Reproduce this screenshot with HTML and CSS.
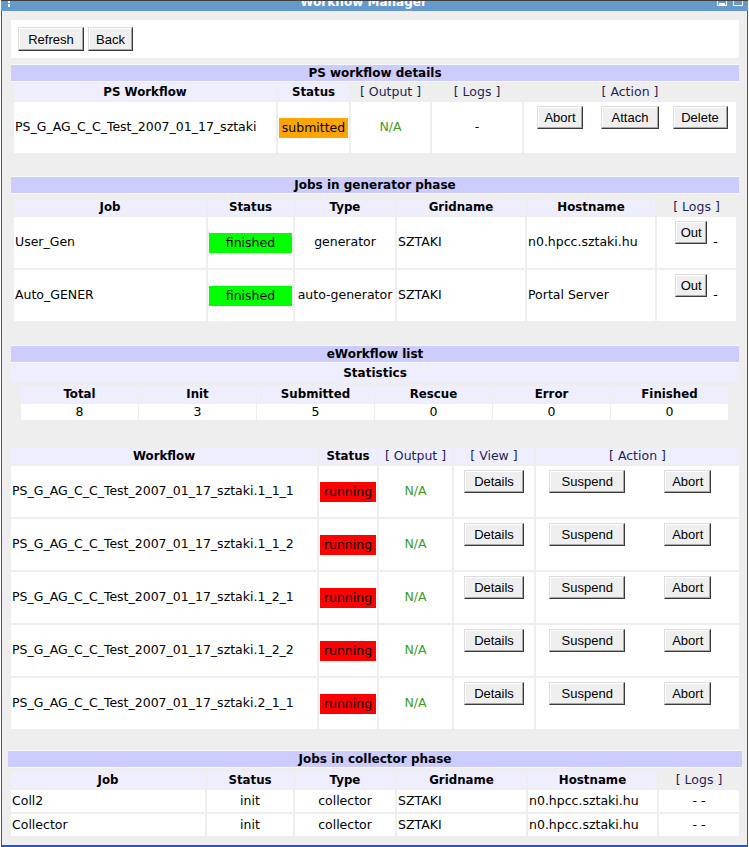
FILE: index.html
```html
<!DOCTYPE html>
<html>
<head>
<meta charset="utf-8">
<title>Workflow Manager</title>
<link rel="stylesheet" href="styles.css">
</head>
<body>
<div class="window">
  <div class="titlebar">
    <svg class="help" width="2" height="10" viewBox="0 0 2 10"><rect x="0" y="0" width="2" height="2" fill="#fff"/><rect x="0" y="3" width="2" height="3" fill="#fff"/></svg>
    <div class="title">Workflow Manager</div>
    <svg class="winicons" width="26" height="10" viewBox="0 0 26 10"><rect x="0.5" y="-5.5" width="9" height="10" fill="none" stroke="#fff"/><rect x="2" y="2" width="6" height="2" fill="#fff"/><rect x="16.5" y="-5.5" width="9" height="10" fill="none" stroke="#fff"/></svg>
  </div>
  <div class="frame">
    <div class="toolbar">
      <button class="btn btn-tool w-refresh">Refresh</button>
      <button class="btn btn-tool w-back">Back</button>
    </div>

    <section class="panel panel-ps">
      <h2 class="bar">PS workflow details</h2>
      <table class="grid grid-ps">
        <colgroup><col class="c262"><col class="c71"><col class="c79"><col class="c90"><col></colgroup>
        <tr class="head">
          <th class="hd">PS Workflow</th>
          <th class="hd">Status</th>
          <th class="lnk">[ Output ]</th>
          <th class="lnk">[ Logs ]</th>
          <th class="lnk">[ Action ]</th>
        </tr>
        <tr class="tall">
          <td>PS_G_AG_C_C_Test_2007_01_17_sztaki</td>
          <td class="status"><span class="badge submitted">submitted</span></td>
          <td class="na">N/A</td>
          <td class="center">-</td>
          <td class="acts-cell"><div class="acts three"><button class="btn w-abort">Abort</button><button class="btn w-attach">Attach</button><button class="btn w-delete">Delete</button></div></td>
        </tr>
      </table>
    </section>

    <section class="panel panel-gen">
      <h2 class="bar">Jobs in generator phase</h2>
      <table class="grid grid-gen">
        <colgroup><col class="c192"><col class="c85"><col class="c100"><col class="c128"><col class="c128"><col></colgroup>
        <tr class="head">
          <th class="hd">Job</th>
          <th class="hd">Status</th>
          <th class="hd">Type</th>
          <th class="hd">Gridname</th>
          <th class="hd">Hostname</th>
          <th class="lnk">[ Logs ]</th>
        </tr>
        <tr class="tall">
          <td>User_Gen</td>
          <td class="status"><span class="badge finished">finished</span></td>
          <td class="center">generator</td>
          <td>SZTAKI</td>
          <td>n0.hpcc.sztaki.hu</td>
          <td class="acts-cell"><div class="outlog"><button class="btn w-out">Out</button><span class="dash">-</span></div></td>
        </tr>
        <tr class="tall">
          <td>Auto_GENER</td>
          <td class="status"><span class="badge finished">finished</span></td>
          <td class="center">auto-generator</td>
          <td>SZTAKI</td>
          <td>Portal Server</td>
          <td class="acts-cell"><div class="outlog"><button class="btn w-out">Out</button><span class="dash">-</span></div></td>
        </tr>
      </table>
    </section>

    <section class="panel panel-ewf">
      <h2 class="bar">eWorkflow list</h2>
      <div class="subbar">Statistics</div>
      <table class="stats">
        <tr class="stats-head">
          <th>Total</th><th>Init</th><th>Submitted</th><th>Rescue</th><th>Error</th><th>Finished</th>
        </tr>
        <tr class="stats-vals">
          <td>8</td><td>3</td><td>5</td><td>0</td><td>0</td><td>0</td>
        </tr>
      </table>
    </section>

    <table class="grid grid-wf">
      <colgroup><col class="c306"><col class="c58"><col class="c73"><col class="c80"><col></colgroup>
      <tr class="head">
        <th class="hd">Workflow</th>
        <th class="hd">Status</th>
        <th class="lnk tinted">[ Output ]</th>
        <th class="lnk tinted">[ View ]</th>
        <th class="lnk tinted">[ Action ]</th>
      </tr>
      <tr class="tall">
        <td>PS_G_AG_C_C_Test_2007_01_17_sztaki.1_1_1</td>
        <td class="status"><span class="badge running">running</span></td>
        <td class="na">N/A</td>
        <td class="acts-cell center"><button class="btn w-details">Details</button></td>
        <td class="acts-cell"><div class="acts two"><button class="btn w-suspend">Suspend</button><button class="btn w-abort2">Abort</button></div></td>
      </tr>
      <tr class="tall">
        <td>PS_G_AG_C_C_Test_2007_01_17_sztaki.1_1_2</td>
        <td class="status"><span class="badge running">running</span></td>
        <td class="na">N/A</td>
        <td class="acts-cell center"><button class="btn w-details">Details</button></td>
        <td class="acts-cell"><div class="acts two"><button class="btn w-suspend">Suspend</button><button class="btn w-abort2">Abort</button></div></td>
      </tr>
      <tr class="tall">
        <td>PS_G_AG_C_C_Test_2007_01_17_sztaki.1_2_1</td>
        <td class="status"><span class="badge running">running</span></td>
        <td class="na">N/A</td>
        <td class="acts-cell center"><button class="btn w-details">Details</button></td>
        <td class="acts-cell"><div class="acts two"><button class="btn w-suspend">Suspend</button><button class="btn w-abort2">Abort</button></div></td>
      </tr>
      <tr class="tall">
        <td>PS_G_AG_C_C_Test_2007_01_17_sztaki.1_2_2</td>
        <td class="status"><span class="badge running">running</span></td>
        <td class="na">N/A</td>
        <td class="acts-cell center"><button class="btn w-details">Details</button></td>
        <td class="acts-cell"><div class="acts two"><button class="btn w-suspend">Suspend</button><button class="btn w-abort2">Abort</button></div></td>
      </tr>
      <tr class="tall">
        <td>PS_G_AG_C_C_Test_2007_01_17_sztaki.2_1_1</td>
        <td class="status"><span class="badge running">running</span></td>
        <td class="na">N/A</td>
        <td class="acts-cell center"><button class="btn w-details">Details</button></td>
        <td class="acts-cell"><div class="acts two"><button class="btn w-suspend">Suspend</button><button class="btn w-abort2">Abort</button></div></td>
      </tr>
    </table>

    <section class="panel panel-col">
      <h2 class="bar">Jobs in collector phase</h2>
      <table class="grid grid-col">
        <colgroup><col class="c194"><col class="c86"><col class="c100"><col class="c129"><col class="c129"><col></colgroup>
        <tr class="head">
          <th class="hd">Job</th>
          <th class="hd">Status</th>
          <th class="hd">Type</th>
          <th class="hd">Gridname</th>
          <th class="hd">Hostname</th>
          <th class="lnk">[ Logs ]</th>
        </tr>
        <tr class="short">
          <td>Coll2</td>
          <td class="center">init</td>
          <td class="center">collector</td>
          <td>SZTAKI</td>
          <td>n0.hpcc.sztaki.hu</td>
          <td class="center">- -</td>
        </tr>
        <tr class="short">
          <td>Collector</td>
          <td class="center">init</td>
          <td class="center">collector</td>
          <td>SZTAKI</td>
          <td>n0.hpcc.sztaki.hu</td>
          <td class="center">- -</td>
        </tr>
      </table>
    </section>
  </div>
</div>
</body>
</html>
```

FILE: styles.css
```css
html, body {
  margin: 0;
  padding: 0;
  background: #ffffff;
}

body {
  font-family: "DejaVu Sans", Verdana, sans-serif;
  font-size: 12.5px;
  line-height: 1.15;
  color: #000;
}

.window {
  width: 747px;
  margin-left: 1px;
}

/* ---------- title bar ---------- */
.titlebar {
  display: flex;
  height: 10px;
  overflow: hidden;
  background: #6699cc;
  border-top: 1px solid #404040;
}

.help {
  flex: none;
  margin-left: 7px;
  display: block;
}

.title {
  flex: 1;
  text-align: center;
  color: #fff;
  font-weight: bold;
  font-size: 12px;
  line-height: 14px;
  margin-top: -6px;
}

.winicons {
  flex: none;
  margin-right: 5px;
  display: block;
}

/* ---------- frame ---------- */
.frame {
  background: #eeeeee;
  border-style: solid;
  border-color: #2456d6;
  border-width: 0 1px 2px 1px;
  padding: 9px 5px 7px 6px;
}

.toolbar {
  margin: 0 3px;
  background: #fff;
  padding: 7px;
  display: flex;
  gap: 4px;
}

/* ---------- buttons ---------- */
.btn {
  font-family: "Liberation Sans", Arial, sans-serif;
  font-size: 13px;
  color: #000;
  background: #efefef;
  border: 1px solid;
  border-color: #dcdcdc #3a3a3a #3a3a3a #dcdcdc;
  box-shadow: inset -1px -1px 0 #a8a8a8, inset 1px 1px 0 #ffffff;
  height: 23px;
  padding: 0;
  margin: 0;
  text-align: center;
  box-sizing: border-box;
}

.btn-tool { height: 24px; }

.w-refresh { width: 66px; }
.w-back { width: 45px; }
.w-abort { width: 46px; }
.w-attach { width: 58px; }
.w-delete { width: 55px; }
.w-details { width: 60px; }
.w-suspend { width: 76px; }
.w-abort2 { width: 47px; }
.w-out { width: 32px; }

/* ---------- panels ---------- */
.panel-ps { margin: 7px 3px 0; }
.panel-gen { margin: 22px 3px 0; }
.panel-ewf { margin: 23px 3px 0; }
.panel-col { margin: 20px 0 0; }

.bar {
  margin: 0;
  height: 16px;
  background: #ccccff;
  font-size: 12px;
  font-weight: bold;
  line-height: 16px;
  text-align: center;
  box-shadow: 0 -1px 0 #f8f8ff, 0 1px 0 #f8f8ff;
}

.subbar {
  margin-top: 2px;
  height: 18px;
  line-height: 18px;
  background: #eeeeff;
  font-size: 12px;
  font-weight: bold;
  text-align: center;
}

/* ---------- data grids ---------- */
.grid {
  border-collapse: separate;
  border-spacing: 2px;
  table-layout: fixed;
}

.grid-ps { width: 726px; margin: 1px 1px 0; }
.grid-gen { width: 726px; margin: 4px 1px 0; }
.grid-wf { width: 732px; margin: 25px 1px 0; }
.grid-col { width: 732px; margin: 3px 1px 0; }

.c262 { width: 262px; }
.c71 { width: 71px; }
.c79 { width: 79px; }
.c90 { width: 90px; }
.c192 { width: 192px; }
.c85 { width: 85px; }
.c100 { width: 100px; }
.c128 { width: 128px; }
.c306 { width: 306px; }
.c58 { width: 58px; }
.c73 { width: 73px; }
.c80 { width: 80px; }
.c194 { width: 194px; }
.c86 { width: 86px; }
.c129 { width: 129px; }

.grid th,
.grid td {
  padding: 0 1px;
  white-space: nowrap;
  overflow: hidden;
}

.grid td {
  background: #fff;
  text-align: left;
  vertical-align: middle;
}

.grid tr.head { height: 16px; }
.grid tr.tall { height: 51px; }
.grid tr.short { height: 22px; }

.grid th {
  line-height: 16px;
  text-align: center;
}

.grid th.hd {
  background: #eeeeff;
  font-weight: bold;
  font-size: 11.8px;
}

.grid th.lnk {
  font-weight: normal;
  color: #1e1e58;
}

.grid th.lnk.tinted {
  background: #eeeeff;
}

.grid td.center { text-align: center; }

.grid td.na {
  text-align: center;
  color: #3f9a1f;
}

.grid td.acts-cell {
  vertical-align: top;
  padding-top: 4px;
}

.grid td.acts-cell.center { text-align: center; }

.acts {
  display: grid;
  justify-items: center;
}

.acts.three { grid-template-columns: repeat(3, 1fr); }
.acts.two { grid-template-columns: repeat(2, 1fr); }

.outlog {
  display: flex;
  justify-content: center;
  align-items: flex-start;
  gap: 6px;
}

.outlog .dash {
  margin-top: 13px;
  line-height: 15px;
}

/* ---------- status badges ---------- */
.badge {
  display: block;
  height: 20px;
  line-height: 20px;
  text-align: center;
  color: #000;
}

.badge.submitted { background: #ffa500; }
.badge.finished { background: #00ff00; }
.badge.running { background: #ff0000; }

/* ---------- statistics ---------- */
.stats {
  border-collapse: separate;
  border-spacing: 1px;
  table-layout: fixed;
  width: 709px;
  margin: 3px 0 0 9px;
}

.stats th,
.stats td {
  padding: 0;
  text-align: center;
}

.stats-head { height: 17px; }
.stats-vals { height: 16px; }

.stats th {
  background: #eeeeff;
  font-weight: bold;
  font-size: 11.8px;
  line-height: 17px;
}

.stats td {
  background: #fff;
  line-height: 16px;
}
```
